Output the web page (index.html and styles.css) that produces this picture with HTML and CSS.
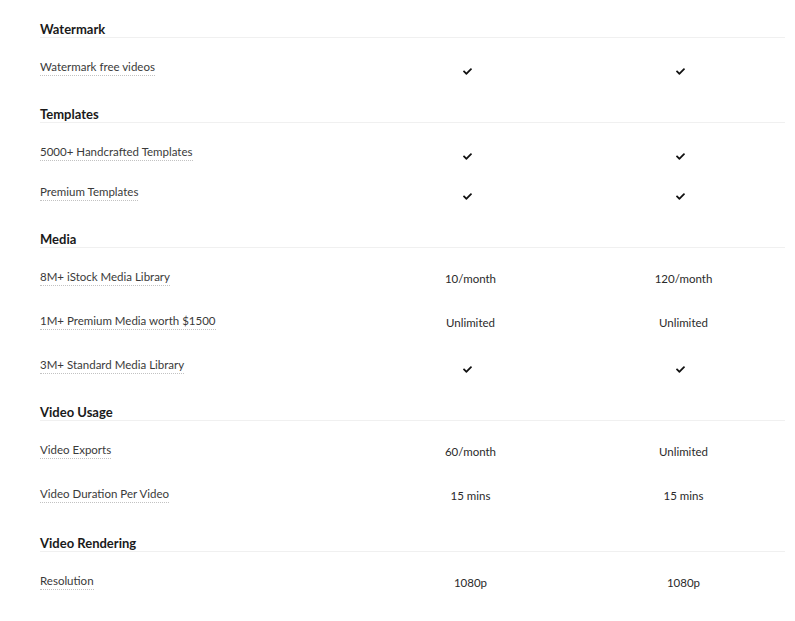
FILE: index.html
```html
<!DOCTYPE html>
<html>
<head>
<meta charset="utf-8">
<link rel="stylesheet" href="styles.css">
</head>
<body>
<div class="table">
  <section class="group">
    <h3 class="group-title">Watermark</h3>
    <div class="row chk"><span class="label">Watermark free videos</span><span class="val"><svg class="check" viewBox="0 0 512 512"><path d="M173.9 439.4l-166.4-166.4c-10-10-10-26.2 0-36.2l36.2-36.2c10-10 26.2-10 36.2 0L192 312.7 432.1 72.6c10-10 26.2-10 36.2 0l36.2 36.2c10 10 10 26.2 0 36.2l-294.4 294.4c-10 10-26.2 10-36.2 0z"/></svg></span><span class="val"><svg class="check" viewBox="0 0 512 512"><path d="M173.9 439.4l-166.4-166.4c-10-10-10-26.2 0-36.2l36.2-36.2c10-10 26.2-10 36.2 0L192 312.7 432.1 72.6c10-10 26.2-10 36.2 0l36.2 36.2c10 10 10 26.2 0 36.2l-294.4 294.4c-10 10-26.2 10-36.2 0z"/></svg></span></div>
  </section>
  <section class="group">
    <h3 class="group-title">Templates</h3>
    <div class="row chk"><span class="label">5000+ Handcrafted Templates</span><span class="val"><svg class="check" viewBox="0 0 512 512"><path d="M173.9 439.4l-166.4-166.4c-10-10-10-26.2 0-36.2l36.2-36.2c10-10 26.2-10 36.2 0L192 312.7 432.1 72.6c10-10 26.2-10 36.2 0l36.2 36.2c10 10 10 26.2 0 36.2l-294.4 294.4c-10 10-26.2 10-36.2 0z"/></svg></span><span class="val"><svg class="check" viewBox="0 0 512 512"><path d="M173.9 439.4l-166.4-166.4c-10-10-10-26.2 0-36.2l36.2-36.2c10-10 26.2-10 36.2 0L192 312.7 432.1 72.6c10-10 26.2-10 36.2 0l36.2 36.2c10 10 10 26.2 0 36.2l-294.4 294.4c-10 10-26.2 10-36.2 0z"/></svg></span></div>
    <div class="row chk"><span class="label">Premium Templates</span><span class="val"><svg class="check" viewBox="0 0 512 512"><path d="M173.9 439.4l-166.4-166.4c-10-10-10-26.2 0-36.2l36.2-36.2c10-10 26.2-10 36.2 0L192 312.7 432.1 72.6c10-10 26.2-10 36.2 0l36.2 36.2c10 10 10 26.2 0 36.2l-294.4 294.4c-10 10-26.2 10-36.2 0z"/></svg></span><span class="val"><svg class="check" viewBox="0 0 512 512"><path d="M173.9 439.4l-166.4-166.4c-10-10-10-26.2 0-36.2l36.2-36.2c10-10 26.2-10 36.2 0L192 312.7 432.1 72.6c10-10 26.2-10 36.2 0l36.2 36.2c10 10 10 26.2 0 36.2l-294.4 294.4c-10 10-26.2 10-36.2 0z"/></svg></span></div>
  </section>
  <section class="group">
    <h3 class="group-title">Media</h3>
    <div class="row txt"><span class="label">8M+ iStock Media Library</span><span class="val">10/month</span><span class="val">120/month</span></div>
    <div class="row txt"><span class="label">1M+ Premium Media worth $1500</span><span class="val">Unlimited</span><span class="val">Unlimited</span></div>
    <div class="row chk"><span class="label">3M+ Standard Media Library</span><span class="val"><svg class="check" viewBox="0 0 512 512"><path d="M173.9 439.4l-166.4-166.4c-10-10-10-26.2 0-36.2l36.2-36.2c10-10 26.2-10 36.2 0L192 312.7 432.1 72.6c10-10 26.2-10 36.2 0l36.2 36.2c10 10 10 26.2 0 36.2l-294.4 294.4c-10 10-26.2 10-36.2 0z"/></svg></span><span class="val"><svg class="check" viewBox="0 0 512 512"><path d="M173.9 439.4l-166.4-166.4c-10-10-10-26.2 0-36.2l36.2-36.2c10-10 26.2-10 36.2 0L192 312.7 432.1 72.6c10-10 26.2-10 36.2 0l36.2 36.2c10 10 10 26.2 0 36.2l-294.4 294.4c-10 10-26.2 10-36.2 0z"/></svg></span></div>
  </section>
  <section class="group">
    <h3 class="group-title">Video Usage</h3>
    <div class="row txt"><span class="label">Video Exports</span><span class="val">60/month</span><span class="val">Unlimited</span></div>
    <div class="row txt"><span class="label">Video Duration Per Video</span><span class="val">15 mins</span><span class="val">15 mins</span></div>
  </section>
  <section class="group last">
    <h3 class="group-title">Video Rendering</h3>
    <div class="row txt"><span class="label">Resolution</span><span class="val">1080p</span><span class="val">1080p</span></div>
  </section>
</div>
</body>
</html>
```
FILE: styles.css
```css
html, body {
  margin: 0;
  padding: 0;
  background: #ffffff;
}
body {
  font-family: "Lato", "Noto Sans", sans-serif;
  color: #2b2b2b;
}
.table {
  padding: 21px 0 0 40px;
  width: 745px;
}
.group + .group {
  margin-top: 28px;
}
.group.last {
  margin-top: 26px;
}
.group-title {
  margin: 0;
  font-size: 13px;
  line-height: 16px;
  font-weight: 700;
  color: #1a1a1a;
  border-bottom: 1px solid #f0f0f0;
}
.row {
  display: grid;
  grid-template-columns: 324px 213px 213px;
  align-items: start;
}
.row.chk { height: 40px; }
.row.txt { height: 44px; }
.label {
  justify-self: start;
  margin-top: 22px;
  font-size: 11.5px;
  line-height: 14px;
  color: #3a3a3a;
  border-bottom: 1px dotted #c2c2c2;
  padding-bottom: 1px;
}
.val {
  display: flex;
  justify-content: center;
  font-size: 11.5px;
  line-height: 14px;
  color: #2a2a2a;
}
.txt .val { margin-top: 24px; }
.chk .val { margin-top: 22px; height: 14px; align-items: center; padding-top: 8px; padding-right: 7px; box-sizing: border-box; }
.check {
  width: 11px;
  height: 9px;
  fill: #111;
}
```
